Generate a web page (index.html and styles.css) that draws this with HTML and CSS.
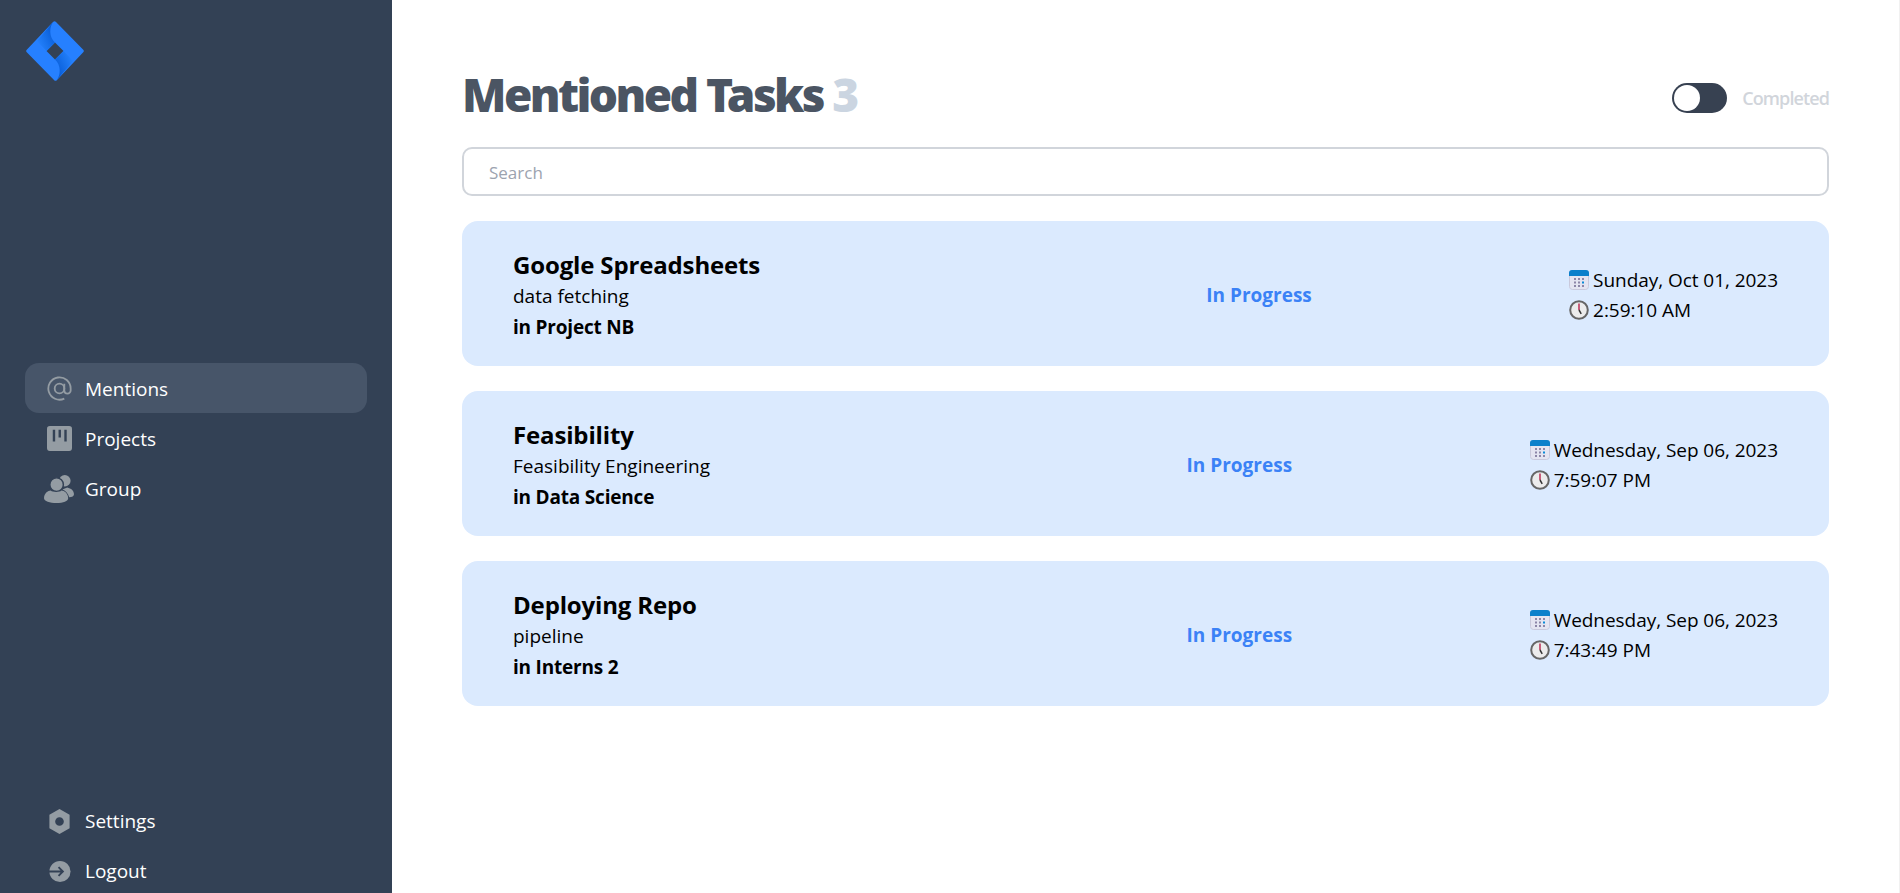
FILE: index.html
```html
<!DOCTYPE html>
<html lang="en">
<head>
  <meta charset="UTF-8" />
  <meta name="viewport" content="width=device-width, initial-scale=1.0"/>
  <title>Mentioned Tasks</title>
  <link rel="stylesheet" href="styles.css">
</head>
<body>
  <svg class="defs" width="0" height="0">
    <defs>
      <linearGradient id="foldTop" x1="1" y1="0" x2="0" y2="0.8">
        <stop offset="0" stop-color="#0052cc"/>
        <stop offset="1" stop-color="#2684ff"/>
      </linearGradient>
      <symbol id="calendar" viewBox="0 0 20 20">
        <rect x="0.5" y="0.5" width="19" height="19" rx="3" fill="#e4e4f1" stroke="#c9c9dc"/>
        <path d="M0 6V3a3 3 0 0 1 3-3h14a3 3 0 0 1 3 3v3z" fill="#0a7fcb"/>
        <g fill="#8d86a8">
          <rect x="5" y="8" width="2" height="2"/><rect x="9" y="8" width="2" height="2"/><rect x="13" y="8" width="2" height="2"/>
          <rect x="5" y="11.5" width="2" height="2"/><rect x="9" y="11.5" width="2" height="2"/>
          <rect x="5" y="15" width="2" height="2"/><rect x="9" y="15" width="2" height="2"/><rect x="13" y="15" width="2" height="2"/>
        </g>
        <rect x="13" y="11.5" width="2" height="2" fill="#0a8ad8"/>
      </symbol>
      <symbol id="clock" viewBox="0 0 20 20">
        <circle cx="10" cy="10" r="8.8" fill="#ececec" stroke="#666" stroke-width="2"/>
        <path d="M10 3.5V10" stroke="#b5123e" stroke-width="1.3"/>
        <path d="M10 10l2.2 3.8" stroke="#333" stroke-width="1.5"/>
      </symbol>
    </defs>
  </svg>

  <div class="layout">
    <aside class="sidebar">
      <div class="logo">
        <svg width="58" height="60" viewBox="0 0 58 60">
          <path fill="#2680ff" fill-rule="evenodd" d="M27 1a2 2 0 0 1 3 0l27 27.500a2 2 0 0 1 0 3L31 59a2 2 0 0 1-3 0L1 31.500a2 2 0 0 1 0-3zM29 21.500L20.500 30l8.500 8.500 8.500-8.500z"/>
          <path fill="url(#foldTop)" d="M27.500 .5C23 6 23 16 29 21.500L20.500 30 11 20z"/>
          <path fill="url(#foldTop)" transform="rotate(180 29 30)" d="M27.500 .5C23 6 23 16 29 21.500L20.500 30 11 20z"/>
        </svg>
      </div>

      <nav class="nav nav-main">
        <a class="nav-item active">
          <svg class="nav-icon" viewBox="0 0 26 26" fill="none" stroke="#949ca3" stroke-width="1.9">
            <circle cx="13" cy="13" r="5"/>
            <path d="M18 8v7a3.300 3.300 0 0 0 6.600 0v-2A11.600 11.600 0 1 0 18 23.500"/>
          </svg>
          <span>Mentions</span>
        </a>
        <a class="nav-item">
          <svg class="nav-icon" viewBox="0 0 26 26">
            <path fill="#949ca3" fill-rule="evenodd" d="M3 0h20a3 3 0 0 1 3 3v20a3 3 0 0 1-3 3H3a3 3 0 0 1-3-3V3a3 3 0 0 1 3-3zM6 4v12h2.500V4zM12 4v8h2.500V4zM18 4v12h2.500V4z"/>
          </svg>
          <span>Projects</span>
        </a>
        <a class="nav-item">
          <svg class="nav-icon group-icon" viewBox="0 0 31 30" fill="#949ca3">
            <circle cx="21.500" cy="7" r="6"/>
            <path d="M24 14c4 1 7 3 7 7 0 2-2 3-5 3-1-4-4-7-7-8z"/>
            <circle cx="13" cy="11" r="7" stroke="#334155" stroke-width="1.500"/>
            <path d="M0 25c0-5 4-8 7-8 2 2 9 2 11 0 3 0 7 3 7 8 0 3-5 5-12 5S0 28 0 25z"/>
          </svg>
          <span>Group</span>
        </a>
      </nav>

      <nav class="nav nav-bottom">
        <a class="nav-item">
          <svg class="nav-icon" viewBox="0 0 26 26">
            <path fill="#949ca3" fill-rule="evenodd" d="M13 0l10.500 6v14L13 26 2.500 20V6zM13 8.500a4.500 4.500 0 1 0 0 9 4.500 4.500 0 0 0 0-9z"/>
          </svg>
          <span>Settings</span>
        </a>
        <a class="nav-item">
          <svg class="nav-icon" viewBox="0 0 26 26">
            <circle cx="13.500" cy="13" r="11" fill="#949ca3"/>
            <path d="M2 13h14M12 8.500l4.500 4.500-4.500 4.500" fill="none" stroke="#334155" stroke-width="2"/>
          </svg>
          <span>Logout</span>
        </a>
      </nav>
    </aside>

    <main class="main">
      <div class="header">
        <h1 class="title">Mentioned Tasks <span class="count">3</span></h1>
        <div class="toggle-wrap">
          <span class="toggle"><span class="knob"></span></span>
          <span class="toggle-label">Completed</span>
        </div>
      </div>

      <input class="search" type="text" placeholder="Search">

      <div class="task">
        <div class="task-info">
          <div class="task-name">Google Spreadsheets</div>
          <div class="task-sub">data fetching</div>
          <div class="task-project">in Project NB</div>
        </div>
        <div class="task-status">In Progress</div>
        <div class="task-time">
          <div class="time-row"><svg class="emoji"><use href="#calendar"/></svg>Sunday, Oct 01, 2023</div>
          <div class="time-row"><svg class="emoji"><use href="#clock"/></svg>2:59:10 AM</div>
        </div>
      </div>

      <div class="task">
        <div class="task-info">
          <div class="task-name">Feasibility</div>
          <div class="task-sub">Feasibility Engineering</div>
          <div class="task-project">in Data Science</div>
        </div>
        <div class="task-status">In Progress</div>
        <div class="task-time">
          <div class="time-row"><svg class="emoji"><use href="#calendar"/></svg>Wednesday, Sep 06, 2023</div>
          <div class="time-row"><svg class="emoji"><use href="#clock"/></svg>7:59:07 PM</div>
        </div>
      </div>

      <div class="task">
        <div class="task-info">
          <div class="task-name">Deploying Repo</div>
          <div class="task-sub">pipeline</div>
          <div class="task-project">in Interns 2</div>
        </div>
        <div class="task-status">In Progress</div>
        <div class="task-time">
          <div class="time-row"><svg class="emoji"><use href="#calendar"/></svg>Wednesday, Sep 06, 2023</div>
          <div class="time-row"><svg class="emoji"><use href="#clock"/></svg>7:43:49 PM</div>
        </div>
      </div>
    </main>
  </div>
</body>
</html>
```

FILE: styles.css
```css
* {
  box-sizing: border-box;
}

body {
  margin: 0;
  background: #ffffff;
  font-family: "Open Sans", "Noto Sans", sans-serif;
  color: #000000;
}

.defs {
  display: block;
  height: 0;
}

.layout {
  display: flex;
  height: 893px;
  overflow: hidden;
  border-right: 1px solid #f1f1f1;
}

.sidebar {
  width: 392px;
  flex-shrink: 0;
  background: #334155;
  display: flex;
  flex-direction: column;
  justify-content: space-between;
  padding: 21px 25px 0;
}

.logo {
  height: 60px;
  padding-left: 1px;
}

.nav {
  display: flex;
  flex-direction: column;
}

.nav-main {
  margin-bottom: 4px;
}

.nav-item {
  display: flex;
  align-items: center;
  height: 50px;
  padding-left: 22px;
  gap: 13px;
  border-radius: 14px;
  color: #ffffff;
  font-size: 19px;
}

.nav-main .nav-item span {
  padding-top: 2px;
}

.nav-item.active {
  background: #475569;
}

.nav-bottom {
  gap: 6px;
}

.nav-bottom .nav-item {
  height: 44px;
}

.nav-icon {
  width: 25px;
  height: 25px;
  flex-shrink: 0;
}

.group-icon {
  width: 30px;
  height: 29px;
  margin-left: -3px;
  margin-right: -2px;
}

.main {
  flex: 1;
  padding: 0 70px;
}

.header {
  display: flex;
  justify-content: space-between;
  align-items: center;
  height: 147px;
  padding-top: 63px;
  padding-bottom: 14px;
}

.title {
  margin: 0 0 7px;
  font-family: "Noto Sans", "Open Sans", sans-serif;
  font-size: 46px;
  line-height: 63px;
  font-weight: 900;
  letter-spacing: -2.6px;
  color: #4b5563;
}

.count {
  color: #cbd5e1;
}

.toggle-wrap {
  display: flex;
  align-items: center;
  gap: 15px;
}

.toggle {
  display: flex;
  align-items: center;
  width: 55px;
  height: 30px;
  padding: 0 2px;
  border-radius: 15px;
  background: #374151;
}

.knob {
  width: 26px;
  height: 26px;
  border-radius: 50%;
  background: #ffffff;
}

.toggle-label {
  font-size: 18px;
  font-weight: 600;
  letter-spacing: -0.9px;
  color: #d1d5db;
}

.search {
  display: block;
  width: 100%;
  height: 49px;
  margin-bottom: 25px;
  padding: 2px 25px 0;
  border: 2px solid #d1d5db;
  border-radius: 10px;
  background: #ffffff;
  font-family: inherit;
  font-size: 17px;
}

.search::placeholder {
  color: #9ca3af;
  opacity: 1;
}

.task {
  display: flex;
  align-items: center;
  height: 145px;
  margin-bottom: 25px;
  padding: 0 51px;
  border-radius: 16px;
  background: #dbeafe;
}

.task-info {
  width: 436px;
  flex-shrink: 0;
  padding-top: 3px;
}

.task-name {
  font-size: 24px;
  font-weight: 700;
  line-height: 33px;
  letter-spacing: -0.15px;
}

.task-sub {
  font-size: 19px;
  line-height: 31px;
}

.task-project {
  font-size: 19px;
  font-weight: 700;
  line-height: 30px;
  letter-spacing: -0.2px;
}

.task-status {
  flex: 1;
  padding-top: 2px;
  text-align: center;
  font-size: 19px;
  font-weight: 700;
  color: #3b82f6;
}

.task-time {
  padding-top: 3px;
}

.time-row {
  display: flex;
  align-items: center;
  gap: 4px;
  font-size: 19px;
  line-height: 30px;
  letter-spacing: -0.05px;
}

.emoji {
  width: 20px;
  height: 20px;
  flex-shrink: 0;
}
```
